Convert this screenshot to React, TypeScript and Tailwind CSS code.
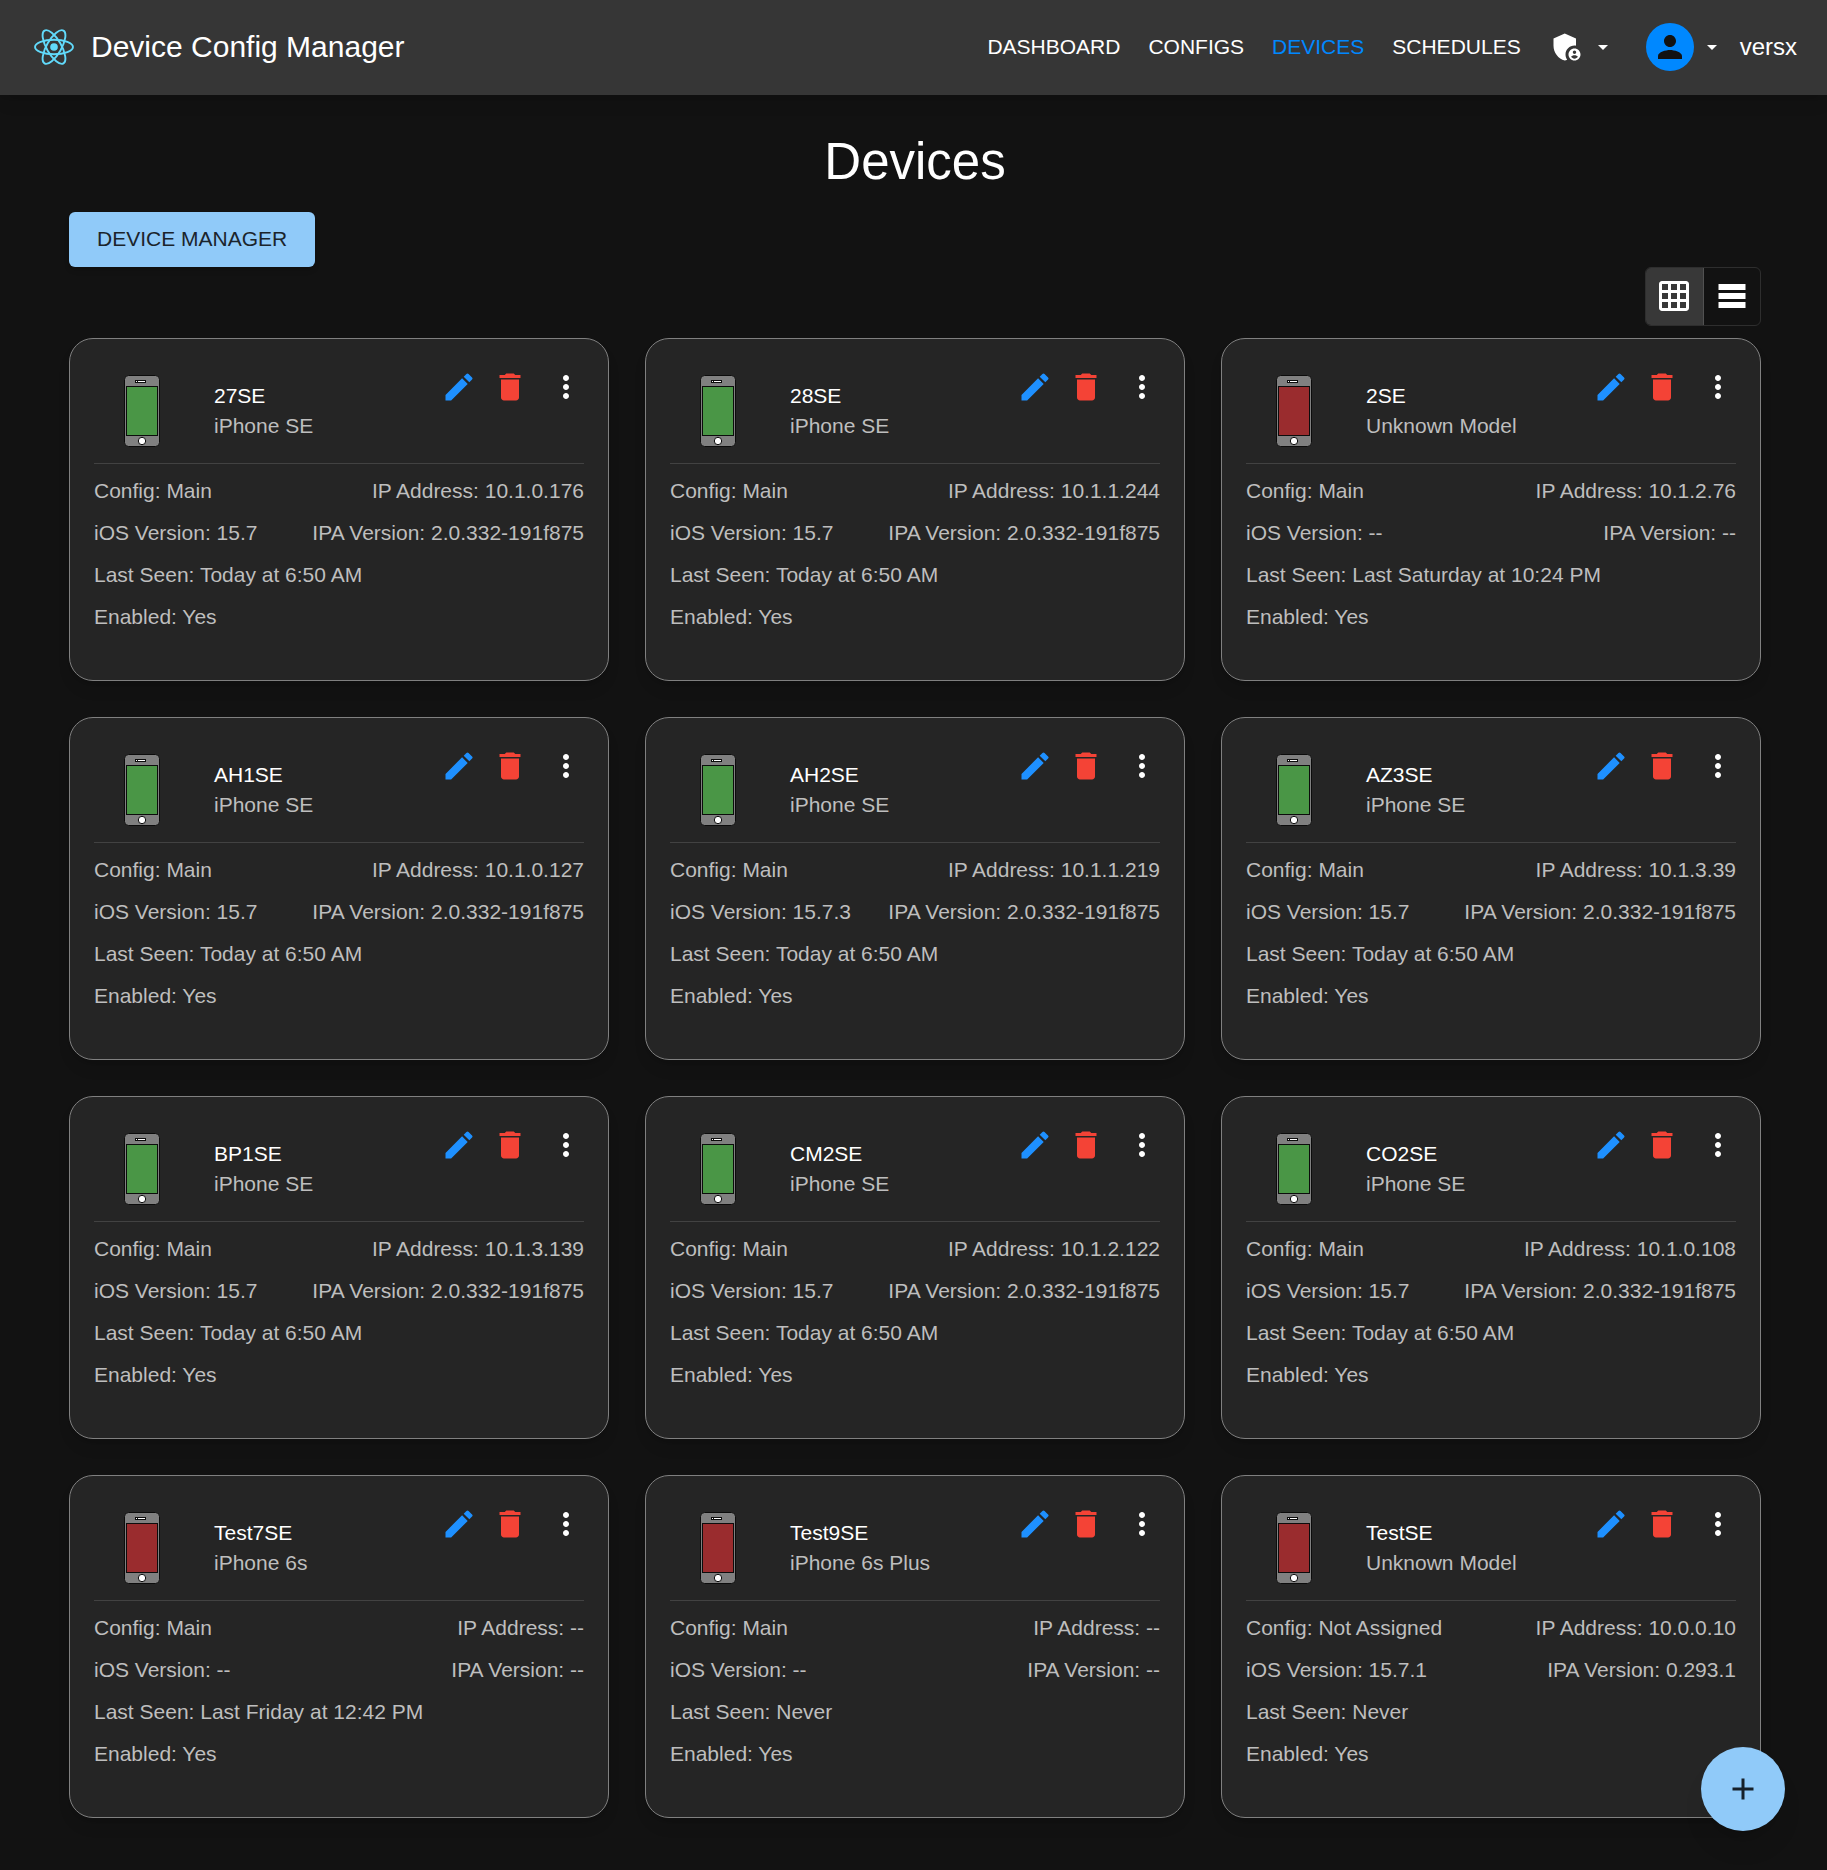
import React from "react";
import {
  MdAdd,
  MdAdminPanelSettings,
  MdArrowDropDown,
  MdDelete,
  MdEdit,
  MdGridOn,
  MdMoreVert,
  MdPerson,
} from "react-icons/md";

type Device = {
  name: string;
  model: string;
  config: string;
  ip: string;
  ios: string;
  ipa: string;
  seen: string;
  online: boolean;
};

const IPA = "2.0.332-191f875";
const TODAY = "Today at 6:50 AM";

const devices: Device[] = [
  { name: "27SE", model: "iPhone SE", config: "Main", ip: "10.1.0.176", ios: "15.7", ipa: IPA, seen: TODAY, online: true },
  { name: "28SE", model: "iPhone SE", config: "Main", ip: "10.1.1.244", ios: "15.7", ipa: IPA, seen: TODAY, online: true },
  { name: "2SE", model: "Unknown Model", config: "Main", ip: "10.1.2.76", ios: "--", ipa: "--", seen: "Last Saturday at 10:24 PM", online: false },
  { name: "AH1SE", model: "iPhone SE", config: "Main", ip: "10.1.0.127", ios: "15.7", ipa: IPA, seen: TODAY, online: true },
  { name: "AH2SE", model: "iPhone SE", config: "Main", ip: "10.1.1.219", ios: "15.7.3", ipa: IPA, seen: TODAY, online: true },
  { name: "AZ3SE", model: "iPhone SE", config: "Main", ip: "10.1.3.39", ios: "15.7", ipa: IPA, seen: TODAY, online: true },
  { name: "BP1SE", model: "iPhone SE", config: "Main", ip: "10.1.3.139", ios: "15.7", ipa: IPA, seen: TODAY, online: true },
  { name: "CM2SE", model: "iPhone SE", config: "Main", ip: "10.1.2.122", ios: "15.7", ipa: IPA, seen: TODAY, online: true },
  { name: "CO2SE", model: "iPhone SE", config: "Main", ip: "10.1.0.108", ios: "15.7", ipa: IPA, seen: TODAY, online: true },
  { name: "Test7SE", model: "iPhone 6s", config: "Main", ip: "--", ios: "--", ipa: "--", seen: "Last Friday at 12:42 PM", online: false },
  { name: "Test9SE", model: "iPhone 6s Plus", config: "Main", ip: "--", ios: "--", ipa: "--", seen: "Never", online: false },
  { name: "TestSE", model: "Unknown Model", config: "Not Assigned", ip: "10.0.0.10", ios: "15.7.1", ipa: "0.293.1", seen: "Never", online: false },
];

function ReactLogo() {
  return (
    <svg viewBox="-11.5 -10.23 23 20.46" className="h-9 w-10 shrink-0" aria-hidden="true">
      <circle r="2.2" fill="#61dafb" />
      <g fill="none" stroke="#61dafb" strokeWidth="1.1">
        <ellipse rx="10.9" ry="4.2" />
        <ellipse rx="10.9" ry="4.2" transform="rotate(60)" />
        <ellipse rx="10.9" ry="4.2" transform="rotate(120)" />
      </g>
    </svg>
  );
}

function Phone({ online }: { online: boolean }) {
  return (
    <svg viewBox="0 0 36 72" className="h-[72px] w-9 shrink-0" role="img" aria-label={online ? "Online" : "Offline"}>
      <rect x="0.5" y="0.5" width="35" height="71" rx="4" fill="#808080" stroke="#0c0c0c" />
      <rect x="11.5" y="5.5" width="10" height="2" fill="#fff" stroke="#0c0c0c" />
      <rect x="13" y="5" width="1" height="3" fill="#0c0c0c" />
      <rect x="2.5" y="11.5" width="31" height="49" fill={online ? "#4a9646" : "#9a2c2e"} stroke="#0c0c0c" />
      <circle cx="18" cy="66" r="3.7" fill="#fff" stroke="#0c0c0c" />
    </svg>
  );
}

function RowsIcon() {
  return (
    <svg viewBox="0 0 24 24" className="size-9" fill="currentColor" aria-hidden="true">
      <path d="M21 8H3V4h18v4zm0 2H3v4h18v-4zm0 6H3v4h18v-4z" />
    </svg>
  );
}

function DeviceCard({ device }: { device: Device }) {
  return (
    <article className="rounded-3xl border border-[#808080] bg-[#252525] px-6 pb-12 shadow-lg">
      <header className="flex items-start border-b border-[#424242] pt-[30px] pb-4">
        <div className="flex min-w-0 flex-1 items-center gap-[54px] pt-1.5 pl-[30px]">
          <Phone online={device.online} />
          <div className="min-w-0">
            <h2 className="text-white">{device.name}</h2>
            <p>{device.model}</p>
          </div>
        </div>
        <div className="flex gap-[15px]">
          <button type="button" aria-label={`Edit ${device.name}`} className="text-[#1e90ff]">
            <MdEdit className="size-9" />
          </button>
          <button type="button" aria-label={`Delete ${device.name}`} className="text-[#f44336]">
            <MdDelete className="size-9" />
          </button>
          <button type="button" aria-label={`More actions for ${device.name}`} className="ml-[5px] text-white">
            <MdMoreVert className="size-9" />
          </button>
        </div>
      </header>
      <div className="flex flex-col gap-3 pt-3">
        <div className="flex justify-between">
          <p>Config: {device.config}</p>
          <p>IP Address: {device.ip}</p>
        </div>
        <div className="flex justify-between">
          <p>iOS Version: {device.ios}</p>
          <p>IPA Version: {device.ipa}</p>
        </div>
        <p>Last Seen: {device.seen}</p>
        <p>Enabled: Yes</p>
      </div>
    </article>
  );
}

export default function App() {
  return (
    <div className="min-h-screen bg-[#121212] font-['Liberation_Sans',Arial,sans-serif] text-[21px] leading-[30px] text-[#bebebe]">
      <header className="flex h-[95px] items-center justify-between bg-[#363636] pr-[30px] pb-0.5 pl-[34px] text-white shadow-lg">
        <a href="#home" className="flex items-center gap-[17px] text-[30px] leading-9">
          <ReactLogo />
          Device Config Manager
        </a>
        <div className="flex items-center">
          <nav className="mr-7 flex gap-7">
            <a href="#dashboard">DASHBOARD</a>
            <a href="#configs">CONFIGS</a>
            <a href="#devices" className="text-[#0088ff]">DEVICES</a>
            <a href="#schedules">SCHEDULES</a>
          </nav>
          <button type="button" aria-label="Administration" className="mr-[31px] flex items-center gap-1.5">
            <MdAdminPanelSettings className="size-9" />
            <MdArrowDropDown className="size-6" />
          </button>
          <button type="button" className="flex items-center text-2xl">
            <span className="mr-1.5 flex size-12 items-center justify-center rounded-full bg-[#0088ff] text-[#121212]">
              <MdPerson className="size-9" />
            </span>
            <MdArrowDropDown className="mr-4 size-6" />
            versx
          </button>
        </div>
      </header>

      <main className="pt-[35px] pr-[66px] pb-12 pl-[69px]">
        <h1 className="mb-[18px] text-center text-[51px] leading-[64px] text-white">Devices</h1>
        <button type="button" className="block h-[55px] rounded-md bg-[#90caf9] px-7 pb-0.5 text-[#1b242c] shadow-md">
          DEVICE MANAGER
        </button>
        <div className="mb-3 flex justify-end">
          <div role="group" aria-label="View" className="flex h-[59px] overflow-hidden rounded-md border border-[#2e2e2e] text-white">
            <button type="button" aria-label="Grid view" aria-pressed="true" className="border-r border-[#515151] bg-[#383838] pr-[11px] pb-px pl-2.5">
              <MdGridOn className="size-9" />
            </button>
            <button type="button" aria-label="List view" aria-pressed="false" className="px-2.5 pb-px">
              <RowsIcon />
            </button>
          </div>
        </div>
        <section aria-label="Device list" className="grid grid-cols-3 gap-9">
          {devices.map((device) => (
            <DeviceCard key={device.name} device={device} />
          ))}
        </section>
      </main>

      <button
        type="button"
        aria-label="Add device"
        className="fixed right-[42px] bottom-[39px] flex size-[84px] items-center justify-center rounded-full bg-[#90caf9] text-[#16202a] shadow-xl"
      >
        <MdAdd className="size-9" />
      </button>
    </div>
  );
}
